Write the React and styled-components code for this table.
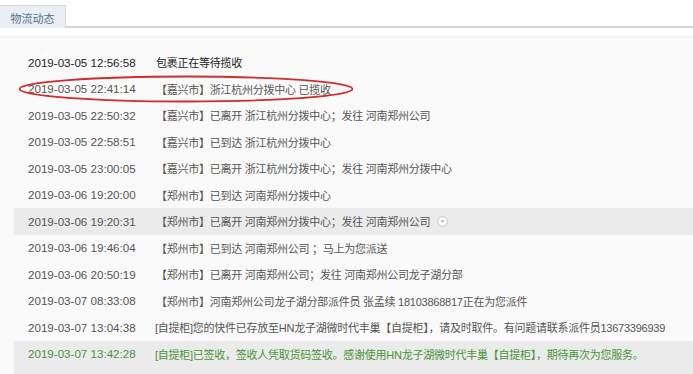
import React from "react";
import styled, { createGlobalStyle } from "styled-components";

const Global = createGlobalStyle`
  body {
    margin: 0;
    background: #fff;
    font-family: "Liberation Sans", "Noto Sans CJK SC", sans-serif;
  }
`;

const rows = [
  { time: "2019-03-05 12:56:58", text: "包裹正在等待揽收", tone: "dark" },
  { time: "2019-03-05 22:41:14", text: "【嘉兴市】浙江杭州分拨中心 已揽收", circled: true },
  { time: "2019-03-05 22:50:32", text: "【嘉兴市】已离开 浙江杭州分拨中心；发往 河南郑州公司" },
  { time: "2019-03-05 22:58:51", text: "【嘉兴市】已到达 浙江杭州分拨中心" },
  { time: "2019-03-05 23:00:05", text: "【嘉兴市】已离开 浙江杭州分拨中心；发往 河南郑州分拨中心" },
  { time: "2019-03-06 19:20:00", text: "【郑州市】已到达 河南郑州分拨中心" },
  { time: "2019-03-06 19:20:31", text: "【郑州市】已离开 河南郑州分拨中心；发往 河南郑州公司", hover: true, more: true },
  { time: "2019-03-06 19:46:04", text: "【郑州市】已到达 河南郑州公司 ；马上为您派送" },
  { time: "2019-03-06 20:50:19", text: "【郑州市】已离开 河南郑州公司；发往 河南郑州公司龙子湖分部" },
  { time: "2019-03-07 08:33:08", text: "【郑州市】河南郑州公司龙子湖分部派件员 张孟续 18103868817正在为您派件" },
  { time: "2019-03-07 13:04:38", text: "[自提柜]您的快件已存放至HN龙子湖微时代丰巢【自提柜】，请及时取件。有问题请联系派件员13673396939", narrow: true },
  {
    time: "2019-03-07 13:42:28",
    text: "[自提柜]已签收，签收人凭取货码签收。感谢使用HN龙子湖微时代丰巢【自提柜】，期待再次为您服务。",
    tone: "green",
    hover: true,
    narrow: true,
    note: "信息来源：淘宝      运单号：9234103788888",
  },
];

const toneColor = { dark: "#222", green: "#4a9438" };

function MoreIcon() {
  return (
    <svg width="11" height="11" viewBox="0 0 11 11">
      <circle cx="5.5" cy="5.5" r="4.8" fill="#fff" stroke="#c4c4c4" />
      <path d="M3.4 4.6 L5.5 6.6 L7.6 4.6 Z" fill="#999" />
    </svg>
  );
}

export default function App() {
  return (
    <>
      <Global />
      <TabBar>
        <Tab>物流动态</Tab>
      </TabBar>
      <Divider />
      <Panel>
        <List>
          {rows.map((r) => (
            <Row key={r.time} $hover={r.hover}>
              {r.circled && (
                <Ellipse width="338" height="30" viewBox="0 0 338 30">
                  <ellipse cx="169" cy="15" rx="166.5" ry="12.5" fill="none" stroke="#d42a2a" strokeWidth="1.8" />
                </Ellipse>
              )}
              <Line>
                <Time $tone={r.tone}>{r.time}</Time>
                <Msg $tone={r.tone} $narrow={r.narrow}>
                  {r.text}
                  {r.more && (
                    <More>
                      <MoreIcon />
                    </More>
                  )}
                </Msg>
              </Line>
              {r.note && (
                <Line>
                  <Time />
                  <Note>{r.note}</Note>
                </Line>
              )}
            </Row>
          ))}
        </List>
      </Panel>
    </>
  );
}

const TabBar = styled.div`
  height: 28px;
  padding-top: 6px;
  box-sizing: border-box;
  border-bottom: 2px solid #d6d6d6;
  display: flex;
  align-items: flex-end;
`;

const Tab = styled.div`
  width: 66px;
  height: 23px;
  box-sizing: border-box;
  margin-bottom: -2px;
  background: #e9eff5;
  border: 1px solid #d2d8de;
  border-bottom: none;
  border-left: none;
  color: #5a7189;
  font-size: 11px;
  display: flex;
  align-items: center;
  justify-content: center;
  padding-top: 1px;
`;

const Divider = styled.div`
  height: 8px;
  border-bottom: 2px solid #f1f1f1;
`;

const Panel = styled.div`
  background: #fafafa;
  padding-top: 11px;
  min-height: 340px;
`;

const List = styled.div`
  display: flex;
  flex-direction: column;
  padding-left: 14px;
`;

const Row = styled.div`
  position: relative;
  background: ${(p) => (p.$hover ? "#ebebeb" : "transparent")};
  padding-left: 14px;
`;

const Line = styled.div`
  display: flex;
  align-items: center;
  height: 26.5px;
`;

const Time = styled.span`
  width: 128px;
  flex: none;
  font-size: 11.6px;
  color: ${(p) => toneColor[p.$tone] || "#555"};
`;

const Msg = styled.span`
  display: flex;
  align-items: center;
  white-space: nowrap;
  font-size: 11px;
  margin-left: ${(p) => (p.$narrow ? "-1px" : "0")};
  letter-spacing: -0.25px;
  color: ${(p) => toneColor[p.$tone] || "#555"};
`;

const Note = styled.span`
  font-size: 11px;
  color: #888;
  white-space: nowrap;
`;

const More = styled.span`
  display: inline-flex;
  margin-left: 7px;
`;

const Ellipse = styled.svg`
  position: absolute;
  left: 3px;
  top: -2px;
  pointer-events: none;
`;
